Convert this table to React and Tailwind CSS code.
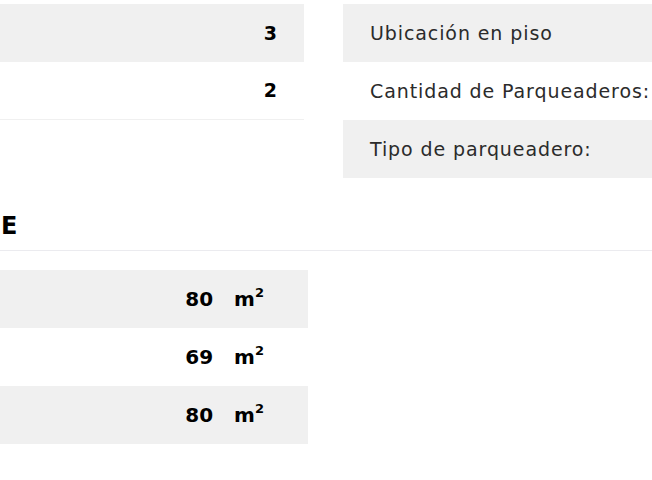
export default function App() {
  const font = { fontFamily: '"DejaVu Sans", sans-serif' };
  return (
    <div className="w-[652px] h-[480px] overflow-hidden bg-white relative" style={font}>
      <div className="pt-[4px] flex">
        <div className="w-[304px] shrink-0">
          <div className="h-[58px] bg-[#f0f0f0] flex items-center justify-end pr-[27px] text-[19px] font-bold text-black">3</div>
          <div className="h-[58px] border-b border-[#f0f0f0] flex items-center justify-end pr-[27px] text-[19px] font-bold text-black">2</div>
        </div>
        <div className="ml-[39px] w-[400px] shrink-0 text-[19px] text-[#2b2b2b] tracking-[0.9px]">
          <div className="h-[58px] bg-[#f0f0f0] flex items-center pl-[27px] whitespace-nowrap">Ubicación en piso</div>
          <div className="h-[58px] flex items-center pl-[27px] whitespace-nowrap">Cantidad de Parqueaderos:</div>
          <div className="h-[58px] bg-[#f0f0f0] flex items-center pl-[27px] whitespace-nowrap">Tipo de parqueadero:</div>
        </div>
      </div>
      <div className="h-[73px] border-b border-[#ebebef] pt-[36px] pl-[1px]">
        <div className="text-[24px] leading-[24px] font-bold text-black">E</div>
      </div>
      <div className="mt-[19px] w-[308px] text-[20px] font-bold text-black">
        {["80", "69", "80"].map((v, i) => (
          <div key={i} className={`h-[58px] flex items-center justify-end pr-[44px] gap-[21px] ${i % 2 === 0 ? "bg-[#f0f0f0]" : ""}`}>
            <span>{v}</span>
            <span className="whitespace-nowrap">m<span className="text-[13px] relative top-[-9px]">2</span></span>
          </div>
        ))}
      </div>
    </div>
  );
}
